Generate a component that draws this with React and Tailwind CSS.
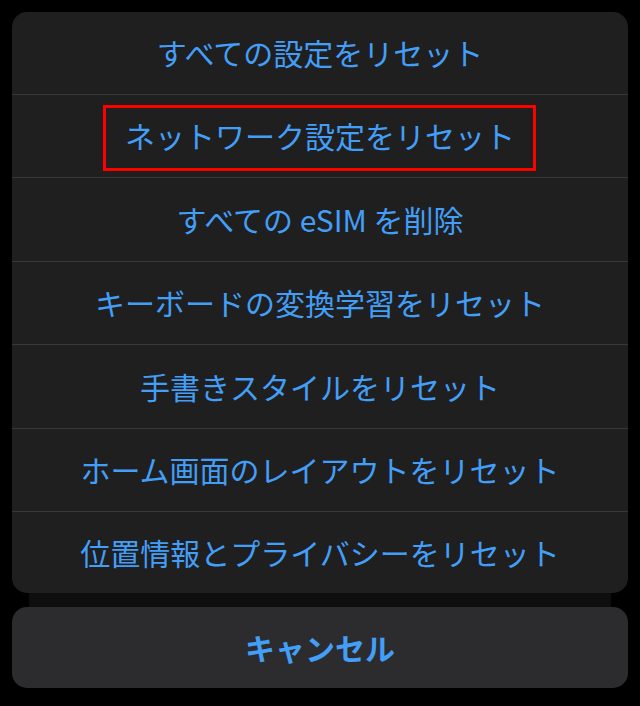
import React from "react";

const rows = [
  { label: "すべての設定をリセット", h: "h-[83px]" },
  { label: "ネットワーク設定をリセット", h: "h-[83px]", marked: true },
  { label: "すべての eSIM を削除", h: "h-[84px]" },
  { label: "キーボードの変換学習をリセット", h: "h-[83px]" },
  { label: "手書きスタイルをリセット", h: "h-[84px]" },
  { label: "ホーム画面のレイアウトをリセット", h: "h-[83px]" },
  { label: "位置情報とプライバシーをリセット", h: "h-[81px]", last: true },
];

export default function App() {
  return (
    <div
      className="w-[640px] h-[706px] bg-black px-[12px] pt-[12px]"
      style={{ fontFamily: '"Noto Sans CJK JP", "Noto Sans", sans-serif' }}
    >
      <div className="rounded-[15px] bg-[#1f1f1f] overflow-hidden">
        {rows.map((r) => (
          <div
            key={r.label}
            className={`${r.h} relative flex items-center justify-center ${
              r.last ? "" : "border-b border-[#383838]"
            }`}
          >
            <span className="text-[30px] leading-none text-[#439ef7] pb-[2px] whitespace-pre">
              {r.label}
            </span>
            {r.marked && (
              <div className="absolute left-[91px] top-[10px] w-[433px] h-[66px] border-[3px] border-[#ff0000]" />
            )}
          </div>
        ))}
      </div>
      <div className="mx-[17px] h-[14px] bg-[#0e0e0e]" />
      <div className="h-[81px] rounded-[15px] bg-[#2c2c2e] flex items-center justify-center">
        <span className="text-[30px] leading-none font-bold text-[#439ef7] pb-[2px]">
          キャンセル
        </span>
      </div>
    </div>
  );
}
